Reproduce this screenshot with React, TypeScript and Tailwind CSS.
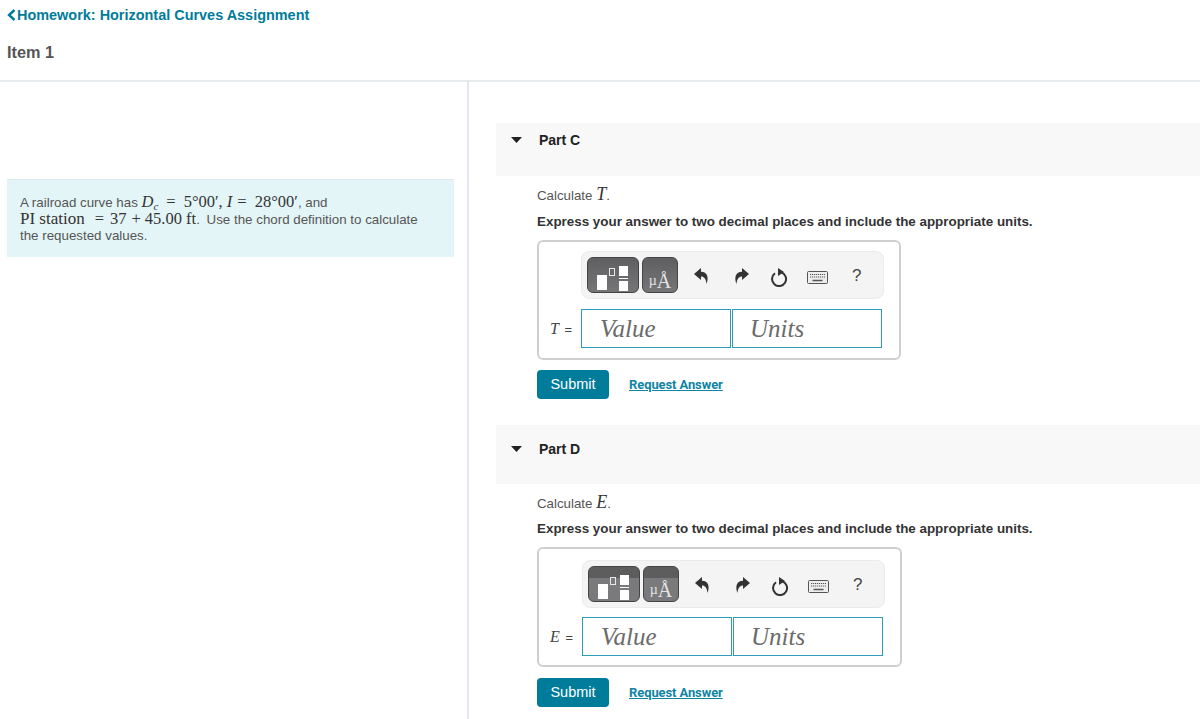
const Tri = () => (
  <svg width="11" height="6" viewBox="0 0 11 6" className="mt-[5px] ml-[15px] mr-[17px] flex-none">
    <path d="M0 0h11L5.500 6z" fill="#222" />
  </svg>
);

const TemplateIcon = () => (
  <svg width="32" height="25" viewBox="0 0 32 25" className="block">
    <rect x="0" y="9" width="10" height="15" fill="#fff" />
    <rect x="12.500" y="2.500" width="5" height="7" fill="none" stroke="#e8e8e8" strokeWidth="1" />
    <rect x="22" y="0" width="9" height="10" fill="#fff" />
    <rect x="22" y="12" width="9" height="1" fill="#fff" />
    <rect x="22" y="15" width="9" height="10" fill="#fff" />
  </svg>
);

const Undo = () => (
  <svg width="15" height="16" viewBox="0 0 15 16">
    <path d="M7 0L0 6l7 6V8.500c3 0 5 2 5.500 7.500C15 10 13.500 3.800 7 3.800z" fill="#333" />
  </svg>
);

const Redo = () => (
  <svg width="15" height="16" viewBox="0 0 15 16">
    <path d="M8 0l7 6-7 6V8.500c-3 0-5 2-5.500 7.500C0 10 1.500 3.800 8 3.800z" fill="#333" />
  </svg>
);

const Reset = () => (
  <svg width="18" height="19" viewBox="0 0 18 19">
    <path d="M11 4.300A7 7 0 1 1 5 5.300" fill="none" stroke="#333" strokeWidth="2" />
    <path d="M8 0l6 4-6 4z" fill="#333" />
  </svg>
);

const Keyboard = () => (
  <svg width="21" height="13" viewBox="0 0 21 13">
    <rect x="0.500" y="0.500" width="20" height="12" rx="1" fill="#eee" stroke="#555" />
    <path d="M3 3.500h15M3 6h15" stroke="#555" strokeWidth="1.200" strokeDasharray="1.200 0.800" />
    <path d="M5.500 9.500h10" stroke="#555" strokeWidth="1.500" />
  </svg>
);

function Part({ name, letter, barClass, exprClass, boxClass, rowClass, actionClass, toolbarBtn }: {
  name: string;
  letter: string;
  barClass: string;
  exprClass: string;
  boxClass: string;
  rowClass: string;
  actionClass: string;
  toolbarBtn: string;
}) {
  return (
    <section>
      <div className={"flex items-start bg-[#f8f8f8] text-[14px] leading-4 font-bold text-[#222] " + barClass}>
        <Tri />
        {name}
      </div>
      <div className="pl-[41px]">
        <p className="mt-[9px] h-5 text-[13.3px] leading-5 text-[#555]">
          Calculate <span className="font-['Liberation_Serif',serif] italic text-[18px] leading-none text-[#333]">{letter}</span>.
        </p>
        <p className={"text-[13.4px] leading-5 font-bold text-[#333] " + exprClass}>
          Express your answer to two decimal places and include the appropriate units.
        </p>
        <div className={"border-2 border-[#cfcfcf] rounded-md h-[120px] " + boxClass}>
          <div className="ml-[42px] w-[303px] flex items-center bg-[#f4f4f4] border border-[#ebebeb] rounded-lg h-12 pl-[5px]">
            <div className={"flex items-end justify-center w-[52px] h-9 rounded-md border border-[#444] pb-[1px] " + toolbarBtn}>
              <TemplateIcon />
            </div>
            <div className={"ml-[3px] flex items-end justify-center w-9 h-9 rounded-md border border-[#444] pb-[1px] font-['Liberation_Serif',serif] leading-5 text-[#e4e4e4] " + toolbarBtn}>
              <span className="text-[14px]">µ</span><span className="text-[20px]">Å</span>
            </div>
            <div className="ml-[16px] w-[15px] flex mt-[2px]"><Undo /></div>
            <div className="ml-[25px] w-[15px] flex mt-[2px]"><Redo /></div>
            <div className="ml-[21px] w-[18px] flex mt-[4px]"><Reset /></div>
            <div className="ml-[19px] w-[21px] flex mt-[4px]"><Keyboard /></div>
            <div className="ml-[24px] text-[17px] text-[#444] mt-[2px]">?</div>
          </div>
          <div className={"flex items-center " + rowClass}>
            <div className="w-[42px] pr-[9px] text-right text-[13px] text-[#444]">
              <span className="font-['Liberation_Serif',serif] italic text-[16px] mr-[2px]">{letter}</span> =
            </div>
            <div className="w-[150px] h-[39px] border border-[#2f9bbb] pl-[18px] font-['Liberation_Serif',serif] italic text-[25px] leading-[37px] text-[#6b6b6b]">Value</div>
            <div className="ml-[1px] w-[150px] h-[39px] border border-[#2f9bbb] pl-[17px] font-['Liberation_Serif',serif] italic text-[25px] leading-[37px] text-[#6b6b6b]">Units</div>
          </div>
        </div>
        <div className={"flex items-center " + actionClass}>
          <button className="w-[72px] h-[29px] rounded-sm bg-[#007c9b] text-white text-[14.500px]">Submit</button>
          <a className="ml-[20px] text-[13px] font-bold tracking-[-0.100px] text-[#0f84a3] underline font-['Roboto',sans-serif]">Request Answer</a>
        </div>
      </div>
    </section>
  );
}

export default function App() {
  return (
    <div className="h-[719px] overflow-hidden bg-white font-['Liberation_Sans',Arial,sans-serif]">
      <header className="h-[82px] border-b-2 border-[#e8ebee] pl-[7px] pt-[7px]">
        <a className="flex items-center h-4 text-[14.450px] leading-4 font-bold text-[#007c9b]">
          <svg width="9" height="12" viewBox="0 0 9 12" className="mr-[1px]">
            <path d="M7.500 1L2 6l5.500 5" fill="none" stroke="#007c9b" strokeWidth="2.400" />
          </svg>
          Homework: Horizontal Curves Assignment
        </a>
        <h1 className="mt-[19px] text-[16.300px] leading-5 font-bold text-[#555]">Item 1</h1>
      </header>
      <main className="flex">
        <div className="w-[469px] h-[637px] flex-none border-r-2 border-[#e3e8ee] pl-[7px] pt-[97px]">
          <div className="w-[447px] h-[78px] bg-[#e4f5f7] border-t border-[#dbeaec] pl-[13px] pt-[15px] pr-[30px] text-[13.330px] leading-[16.500px] text-[#555]">
            A railroad curve has{" "}
            <span className="font-['Liberation_Serif',serif] text-[16.500px] leading-[0] text-[#333]">
              <i>D<sub className="static text-[11px] align-[-3px] leading-[0]">c</sub></i>
              <span className="ml-[8px] mr-[8px]">=</span>5°00′, <i>I</i>
              <span className="ml-[5px] mr-[8px]">=</span>28°00′
            </span>, and<br />
            <span className="font-['Liberation_Serif',serif] text-[16.500px] leading-[0] text-[#333]">
              <span className="text-[17px]">PI station</span><span className="ml-[10px] mr-[6px]">=</span>37<span className="ml-[5px] mr-[4px]">+</span>45.00 ft
            </span>. <span className="ml-[3px]">Use the chord definition to calculate the requested values.</span>
          </div>
        </div>
        <div className="flex-1 pl-[27px] pt-[41px]">
          <Part
            name="Part C"
            letter="T"
            barClass="h-[53px] pt-[9px]"
            exprClass="mt-[7px]"
            boxClass="mt-[8px] w-[364px] pt-[9px]"
            rowClass="mt-[10px]"
            actionClass="mt-[10px] mb-[26px]"
            toolbarBtn="bg-gradient-to-b from-[#5f5f61] to-[#767678]"
          />
          <Part
            name="Part D"
            letter="E"
            barClass="h-[59px] pt-[16px]"
            exprClass="mt-[6px]"
            boxClass="mt-[8px] w-[365px] pt-[11px] pl-[1px]"
            rowClass="mt-[9px]"
            actionClass="mt-[11px]"
            toolbarBtn="bg-[linear-gradient(#5d5d5d_33%,#7a7a7c_33%)]"
          />
        </div>
      </main>
    </div>
  );
}
